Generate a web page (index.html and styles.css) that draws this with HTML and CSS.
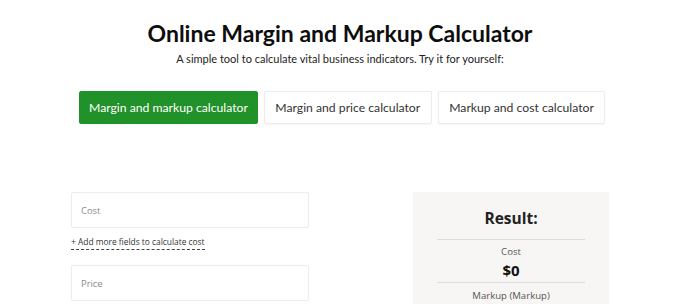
FILE: index.html
```html
<!DOCTYPE html>
<html lang="en">
<head>
<meta charset="utf-8">
<title>Online Margin and Markup Calculator</title>
<link rel="stylesheet" href="styles.css">
</head>
<body>
<div class="page">
  <header class="hero">
    <h1 class="title">Online Margin and Markup Calculator</h1>
    <p class="subtitle">A simple tool to calculate vital business indicators. Try it for yourself:</p>
  </header>
  <nav class="tabs">
    <button class="tab tab-active">Margin and markup calculator</button>
    <button class="tab">Margin and price calculator</button>
    <button class="tab">Markup and cost calculator</button>
  </nav>
  <main class="calc">
    <section class="form">
      <div class="field"><span class="placeholder">Cost</span></div>
      <a class="more-link">+ Add more fields to calculate cost</a>
      <div class="field"><span class="placeholder">Price</span></div>
    </section>
    <aside class="result">
      <h2 class="result-title">Result:</h2>
      <div class="result-item">
        <div class="result-label">Cost</div>
        <div class="result-value">$0</div>
      </div>
      <div class="result-item">
        <div class="result-label">Markup (Markup)</div>
      </div>
    </aside>
  </main>
</div>
</body>
</html>
```

FILE: styles.css
```css
* { box-sizing: border-box; }
html, body { margin: 0; padding: 0; background: #fff; }
body { font-family: Lato, "Open Sans", sans-serif; color: #111; overflow: hidden; }

.page {
  width: 680px;
  display: flex;
  flex-direction: column;
  align-items: center;
}

.hero { text-align: center; padding-top: 19px; }
.title {
  margin: 0;
  font-size: 23px;
  font-weight: 700;
  line-height: 28px;
  color: #0d0d0d;
}
.subtitle {
  margin: 5px 0 0;
  font-size: 11px;
  line-height: 14px;
  color: #222;
}

.tabs {
  display: flex;
  gap: 6px;
  margin-top: 25px;
  align-self: flex-start;
  margin-left: 79px;
}
.tab {
  font-family: Lato, sans-serif;
  font-size: 12.2px;
  height: 33px;
  padding: 0 10.5px;
  background: #fff;
  color: #333;
  border: 1px solid #ececec;
  border-radius: 2px;
  box-shadow: 0 1px 2px rgba(0,0,0,0.04);
}
.tab-active {
  padding: 0 9px;
  background: #21912a;
  border-color: #21912a;
  color: #fff;
}

.calc {
  align-self: stretch;
  display: flex;
  justify-content: space-between;
  padding: 0 71px 0 71px;
  margin-top: 68px;
}

.form { width: 238px; display: flex; flex-direction: column; align-items: flex-start; }
.field {
  width: 238px;
  height: 36px;
  border: 1px solid #ececec;
  border-radius: 2px;
  display: flex;
  align-items: center;
  padding-left: 9px;
}
.placeholder {
  font-family: "Open Sans", sans-serif;
  font-size: 9.4px;
  color: #8c8c8c;
}
.more-link {
  font-family: "Open Sans", sans-serif;
  font-size: 8.4px;
  color: #333;
  margin: 8px 0 15px;
  line-height: 12px;
  padding-bottom: 1px;
  border-bottom: 1px dashed #444;
}

.result {
  width: 196px;
  height: 120px;
  background: #f7f6f4;
  padding: 15px 24px 0;
  font-family: "Open Sans", sans-serif;
  text-align: center;
}
.result-title {
  margin: 0;
  font-size: 15.5px;
  font-weight: 700;
  line-height: 22px;
  color: #222;
  padding-bottom: 10px;
}
.result-item { border-top: 1px solid #dcdcdc; padding-top: 5px; }
.result-item + .result-item { padding-top: 6px; }
.result-label { font-size: 9.6px; color: #555; line-height: 14px; }
.result-value { font-size: 15px; font-weight: 700; color: #111; line-height: 18px; margin-top: 2px; padding-bottom: 3px; }
```
